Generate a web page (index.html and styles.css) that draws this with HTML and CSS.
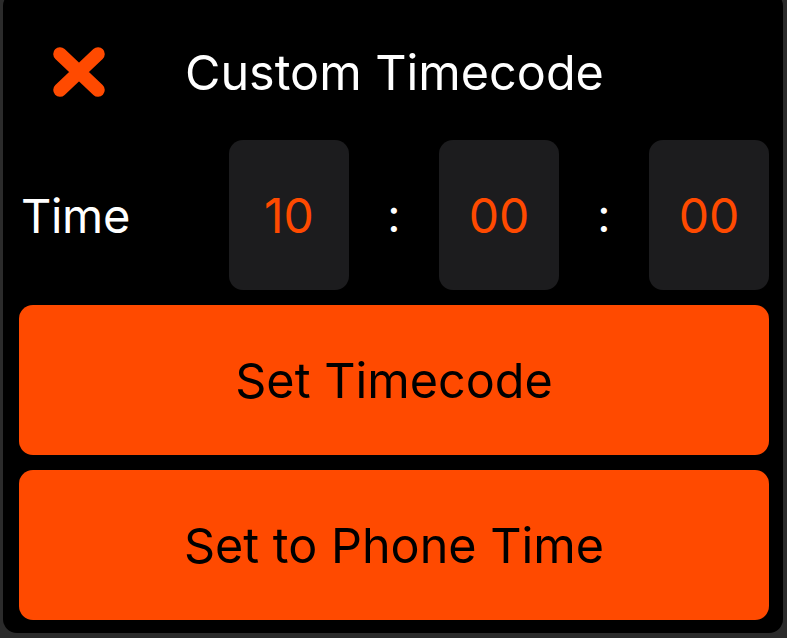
FILE: index.html
```html
<!DOCTYPE html>
<html lang="en">
<head>
<meta charset="utf-8">
<title>Custom Timecode</title>
<link rel="stylesheet" href="styles.css">
</head>
<body>
<div class="panel">
  <div class="header">
    <div class="close">
      <svg width="52" height="50" viewBox="0 0 52 50" aria-label="Close">
        <path d="M7 7 L45 43 M45 7 L7 43" stroke="#ff4a00" stroke-width="13.5" stroke-linecap="round" fill="none"/>
      </svg>
    </div>
    <div class="title">Custom Timecode</div>
  </div>
  <div class="time-row">
    <div class="label">Time</div>
    <div class="box">10</div>
    <div class="colon">:</div>
    <div class="box">00</div>
    <div class="colon">:</div>
    <div class="box">00</div>
  </div>
  <div class="btn">Set Timecode</div>
  <div class="btn">Set to Phone Time</div>
</div>
</body>
</html>
```
FILE: styles.css
```css
html, body {
  margin: 0;
  padding: 0;
  background: #2b2b2b;
  height: 638px;
  overflow: hidden;
}
body {
  font-family: Inter, "Liberation Sans", sans-serif;
}
.panel {
  margin: -8px 0 0 3px;
  width: 780px;
  box-sizing: border-box;
  padding: 26px 14px 13px 16px;
  background: #000;
  border-radius: 14px;
  display: flex;
  flex-direction: column;
}
.header {
  height: 108px;
  display: flex;
  align-items: center;
  margin-bottom: 14px;
}
.close {
  width: 120px;
  display: flex;
  justify-content: center;
  align-items: center;
}
.close svg {
  display: block;
}
.title {
  margin-left: 46px;
  color: #fff;
  font-size: 48.5px;
}
.time-row {
  display: grid;
  grid-template-columns: 210px 120px 90px 120px 90px 120px;
  height: 150px;
  align-items: center;
  margin-bottom: 15px;
}
.label {
  color: #fff;
  font-size: 47px;
  padding-left: 2px;
  letter-spacing: -0.3px;
}
.box {
  height: 150px;
  background: #1c1c1e;
  border-radius: 14px;
  display: flex;
  align-items: center;
  justify-content: center;
  color: #ff4a00;
  font-size: 48px;
}
.colon {
  color: #fff;
  font-size: 46px;
  text-align: center;
}
.btn {
  height: 150px;
  background: #ff4a00;
  border-radius: 14px;
  display: flex;
  align-items: center;
  justify-content: center;
  color: #000;
  font-size: 48.5px;
}
.btn + .btn {
  margin-top: 15px;
}
```
